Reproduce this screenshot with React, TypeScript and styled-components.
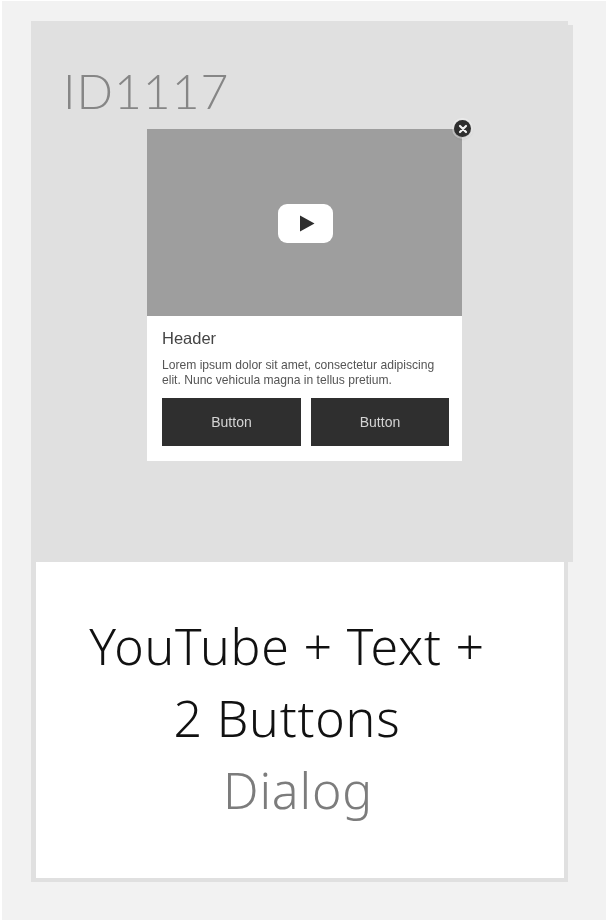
import * as React from "react";
import styled, { createGlobalStyle } from "styled-components";

const GlobalStyle = createGlobalStyle`
  html, body {
    margin: 0;
    padding: 0;
    background: #ffffff;
  }
`;

const Page = styled.div`
  box-sizing: border-box;
  width: 604px;
  height: 919px;
  margin: 1px 0 0 2px;
  padding: 20px 38px 0 29px;
  background: #f2f2f2;
`;

const Card = styled.div`
  display: flex;
  flex-direction: column;
  filter: blur(0.5px);
`;

const Preview = styled.div`
  position: relative;
  box-sizing: border-box;
  height: 541px;
  padding: 44px 0 0 116px;
  background: #e0e0e0;

  &::after {
    content: "";
    position: absolute;
    top: 4px;
    right: -5px;
    bottom: 0;
    width: 5px;
    background: #e0e0e0;
  }
`;

const TemplateId = styled.div`
  height: 64px;
  margin-left: -84px;
  font-family: Lato, sans-serif;
  font-weight: 300;
  font-size: 48px;
  letter-spacing: 1px;
  line-height: 52px;
  color: #868686;
`;

const Dialog = styled.div`
  position: relative;
  display: flex;
  flex-direction: column;
  width: 315px;
  height: 332px;
  background: #ffffff;
`;

const Video = styled.div`
  display: flex;
  align-items: center;
  justify-content: center;
  height: 187px;
  padding: 2px 0 0 1px;
  box-sizing: border-box;
  background: #9e9e9e;
`;

const PlayButton = styled.div`
  display: flex;
  align-items: center;
  justify-content: center;
  width: 55px;
  height: 39px;
  padding-left: 3px;
  box-sizing: border-box;
  border-radius: 9px;
  background: #ffffff;
`;

const CloseButton = styled.div`
  position: absolute;
  top: -9px;
  right: -9px;
  display: flex;
  align-items: center;
  justify-content: center;
  width: 17px;
  height: 17px;
  border-radius: 50%;
  background: #2e2e2e;
  box-shadow: 0 0 0 2px rgba(255, 255, 255, 0.4), 0 1px 3px rgba(0, 0, 0, 0.35);
`;

const DialogBody = styled.div`
  display: flex;
  flex-direction: column;
  padding: 13px 13px 0 15px;
  font-family: "Liberation Sans", Arial, sans-serif;
`;

const Header = styled.div`
  font-size: 16.5px;
  line-height: 19px;
  color: #444444;
`;

const Lorem = styled.p`
  margin: 10px 0 0;
  font-size: 12.1px;
  line-height: 15px;
  color: #555555;
`;

const Actions = styled.div`
  display: grid;
  grid-template-columns: 139px 138px;
  column-gap: 10px;
  margin-top: 10px;
`;

const ActionButton = styled.div`
  display: flex;
  align-items: center;
  justify-content: center;
  height: 48px;
  background: #2f2f2f;
  font-size: 14px;
  color: #d4d4d4;
`;

const Info = styled.div`
  box-sizing: border-box;
  display: flex;
  flex-direction: column;
  align-items: center;
  height: 320px;
  padding-top: 48px;
  background: #ffffff;
  border: solid #e0e0e0;
  border-width: 0 4px 4px 5px;
  font-family: "Noto Sans", sans-serif;
  font-weight: 300;
  font-size: 50px;
  letter-spacing: 0.8px;
  line-height: 72px;
  text-align: center;
`;

const Title = styled.div`
  width: 420px;
  margin-right: 26px;
  color: #111111;
`;

const Category = styled.div`
  margin-right: 4px;
  color: #7c7c7c;
`;

export default function App() {
  return (
    <>
      <GlobalStyle />
      <Page>
        <Card>
          <Preview>
            <TemplateId>ID1117</TemplateId>
            <Dialog>
              <CloseButton>
                <svg width="10" height="10" viewBox="0 0 10 10">
                  <path d="M2 2 8 8M8 2 2 8" stroke="#f2f2f2" strokeWidth="2.2" strokeLinecap="round" />
                </svg>
              </CloseButton>
              <Video>
                <PlayButton>
                  <svg width="16" height="17" viewBox="0 0 16 17">
                    <path d="M1 0.5 15.5 8.5 1 16.5Z" fill="#2e2e2e" />
                  </svg>
                </PlayButton>
              </Video>
              <DialogBody>
                <Header>Header</Header>
                <Lorem>
                  Lorem ipsum dolor sit amet, consectetur adipiscing elit. Nunc vehicula magna in tellus pretium.
                </Lorem>
                <Actions>
                  <ActionButton>Button</ActionButton>
                  <ActionButton>Button</ActionButton>
                </Actions>
              </DialogBody>
            </Dialog>
          </Preview>
          <Info>
            <Title>YouTube + Text + 2 Buttons</Title>
            <Category>Dialog</Category>
          </Info>
        </Card>
      </Page>
    </>
  );
}
